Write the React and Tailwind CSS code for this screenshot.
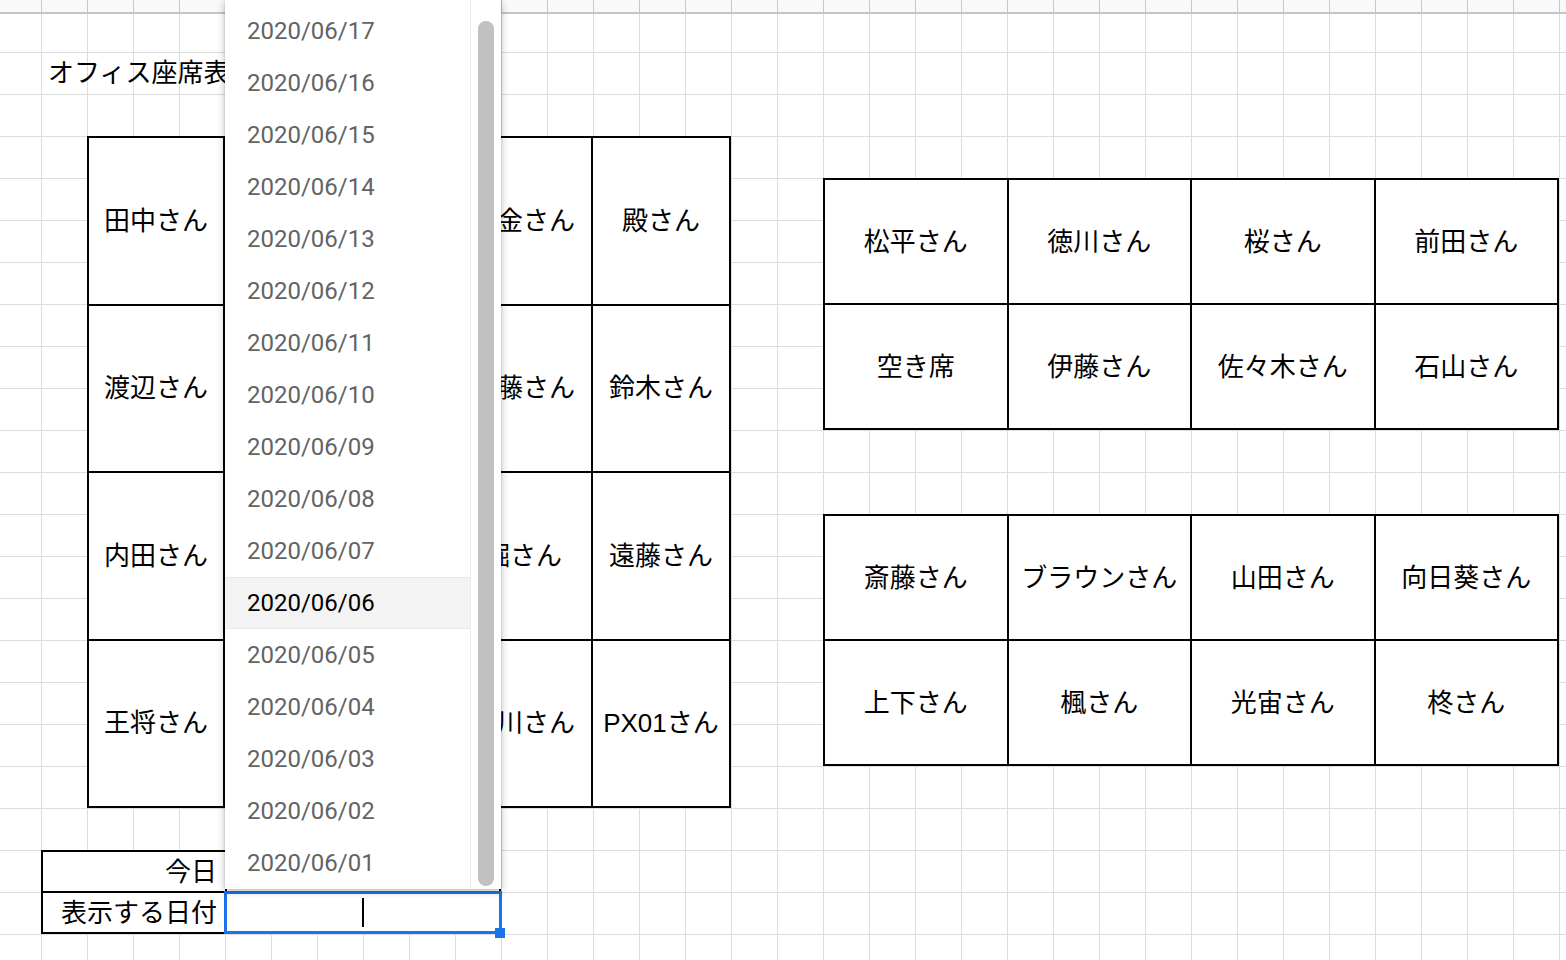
const dates = ["17","16","15","14","13","12","11","10","09","08","07","06","05","04","03","02","01"];

const leftRows = [
  ["田中さん", "", "白金さん", "殿さん"],
  ["渡辺さん", "", "佐藤さん", "鈴木さん"],
  ["内田さん", "", "堀さん", "遠藤さん"],
  ["王将さん", "", "石川さん", "PX01さん"],
];

const rightTop = ["松平さん", "徳川さん", "桜さん", "前田さん", "空き席", "伊藤さん", "佐々木さん", "石山さん"];
const rightBottom = ["斎藤さん", "ブラウンさん", "山田さん", "向日葵さん", "上下さん", "楓さん", "光宙さん", "柊さん"];

function Cell({ children }) {
  return (
    <div className="bg-white flex items-center justify-center text-[26px] leading-none whitespace-nowrap overflow-hidden">
      {children}
    </div>
  );
}

export default function App() {
  return (
    <div className="relative w-[1566px] h-[960px] overflow-hidden bg-white text-black font-['Liberation_Sans','Noto_Sans_CJK_JP',sans-serif]">
      {/* column header strip */}
      <div className="h-[14px] border-b-2 border-[#c4c7c5] bg-[#f8f9fa] bg-[linear-gradient(to_right,#c8c8c8_1px,transparent_1px)] bg-[size:46px_100%] bg-[position:41px_0px]" />

      {/* sheet body */}
      <div className="grid grid-cols-[41px_repeat(34,46px)] grid-rows-[38px_repeat(22,42px)] h-[946px] bg-[linear-gradient(to_right,#dcdcdc_1px,transparent_1px),linear-gradient(to_bottom,#dcdcdc_1px,transparent_1px)] bg-[size:46px_42px] bg-[position:41px_38px]">
        {/* title */}
        <div className="col-start-2 col-end-8 row-start-2 row-end-3 flex items-center pl-[7px] text-[26px] leading-none whitespace-nowrap">
          オフィス座席表
        </div>

        {/* left seating table */}
        <div className="col-start-3 col-end-17 row-start-4 row-end-20 grid grid-cols-[134px_228px_136px_136px] grid-rows-4 gap-[2px] border-2 border-black bg-black">
          {leftRows.flat().map((n, i) => (
            <Cell key={i}>{n}</Cell>
          ))}
        </div>

        {/* right top table */}
        <div className="col-start-19 col-end-35 row-start-5 row-end-11 grid grid-cols-4 grid-rows-2 gap-[2px] border-2 border-black bg-black">
          {rightTop.map((n, i) => (
            <Cell key={i}>{n}</Cell>
          ))}
        </div>

        {/* right bottom table */}
        <div className="col-start-19 col-end-35 row-start-13 row-end-19 grid grid-cols-4 grid-rows-2 gap-[2px] border-2 border-black bg-black">
          {rightBottom.map((n, i) => (
            <Cell key={i}>{n}</Cell>
          ))}
        </div>

        {/* date table */}
        <div className="col-start-2 col-end-12 row-start-21 row-end-23 grid grid-cols-[182px_272px] grid-rows-2 gap-[2px] border-2 border-black bg-black">
          <div className="bg-white flex items-center justify-end pr-[8px] text-[26px] leading-none whitespace-nowrap">今日</div>
          <div className="bg-white" />
          <div className="bg-white flex items-center justify-end pr-[8px] text-[26px] leading-none whitespace-nowrap">表示する日付</div>
          <div className="relative bg-white flex items-center justify-center">
            <div className="w-[2px] h-[29px] bg-black" />
            <div className="absolute -left-[3px] -right-[3px] -top-[2px] -bottom-[2px] border-[3px] border-[#1a73e8]" />
            <div className="absolute -right-[6px] -bottom-[6px] w-[10px] h-[10px] bg-[#1a73e8]" />
          </div>
        </div>
      </div>

      {/* dropdown list */}
      <div className="absolute left-[225px] top-0 z-10 w-[276px] h-[889px] flex bg-white shadow-[0_2px_8px_rgba(0,0,0,0.28),0_0_2px_rgba(0,0,0,0.15)]">
        <div className="flex-1 flex flex-col pt-[5px] font-['Roboto',sans-serif]">
          {dates.map((d) => {
            const active = d === "06";
            return (
              <div
                key={d}
                className={
                  active
                    ? "h-[52px] shrink-0 flex items-center pl-[22px] text-[24px] text-black bg-[#f3f3f3] border-y border-[#e8e8e8]"
                    : "h-[52px] shrink-0 flex items-center pl-[22px] text-[24px] text-[#636363]"
                }
              >
                2020/06/{d}
              </div>
            );
          })}
        </div>
        <div className="w-[31px] border-l border-[#ececec] pl-[7px] pt-[21px]">
          <div className="w-[16px] h-[865px] rounded-full bg-[#c1c1c1]" />
        </div>
      </div>
    </div>
  );
}
